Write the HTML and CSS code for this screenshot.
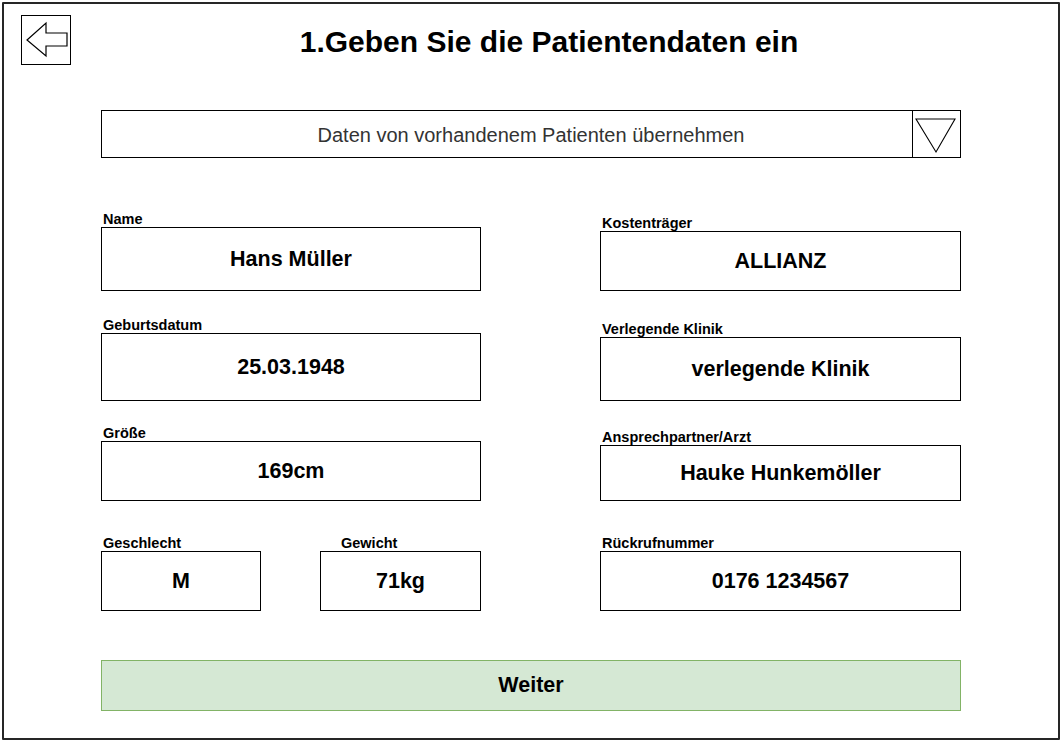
FILE: index.html
```html
<!DOCTYPE html>
<html lang="de">
<head>
<meta charset="utf-8">
<title>Patientendaten</title>
<link rel="stylesheet" href="styles.css">
</head>
<body>
<div class="frame">
  <header class="header">
    <button class="back" aria-label="Zurück">
      <svg width="48" height="48" viewBox="0 0 48 48"><polygon points="5,24 24,7 24,17 45,17 45,30 24,30 24,40" fill="#fff" stroke="#000" stroke-width="1.2" stroke-linejoin="miter"/></svg>
    </button>
    <h1 class="title">1.Geben Sie die Patientendaten ein</h1>
  </header>

  <div class="dropdown">
    <span class="dropdown-text">Daten von vorhandenem Patienten übernehmen</span>
    <span class="dropdown-btn">
      <svg width="47" height="46" viewBox="0 0 47 46"><polygon points="3,8 42,8 23,41" fill="none" stroke="#000" stroke-width="1.1"/></svg>
    </span>
  </div>

  <div class="fields">
    <div class="col">
      <div class="field">
        <div class="label">Name</div>
        <div class="box h64">Hans Müller</div>
      </div>
      <div class="field m26">
        <div class="label">Geburtsdatum</div>
        <div class="box h68">25.03.1948</div>
      </div>
      <div class="field m24">
        <div class="label">Größe</div>
        <div class="box h60">169cm</div>
      </div>
      <div class="pair m34">
        <div class="field small">
          <div class="label">Geschlecht</div>
          <div class="box h60">M</div>
        </div>
        <div class="field small wide">
          <div class="label indent">Gewicht</div>
          <div class="box h60">71kg</div>
        </div>
      </div>
    </div>
    <div class="col">
      <div class="field m4">
        <div class="label">Kostenträger</div>
        <div class="box h60">ALLIANZ</div>
      </div>
      <div class="field m30">
        <div class="label">Verlegende Klinik</div>
        <div class="box h64">verlegende Klinik</div>
      </div>
      <div class="field m28">
        <div class="label">Ansprechpartner/Arzt</div>
        <div class="box h56">Hauke Hunkemöller</div>
      </div>
      <div class="field m34">
        <div class="label">Rückrufnummer</div>
        <div class="box h60">0176 1234567</div>
      </div>
    </div>
  </div>

  <button class="next">Weiter</button>
</div>
</body>
</html>
```

FILE: styles.css
```css
* { box-sizing: border-box; }

html, body {
  margin: 0;
  padding: 0;
  background: #fff;
}

body {
  width: 1062px;
  height: 742px;
  overflow: hidden;
  font-family: "Liberation Sans", Arial, sans-serif;
  color: #000;
}

.frame {
  width: 1058px;
  height: 738px;
  margin: 2px;
  border: 2px solid #262626;
  border-radius: 1px;
}

.header {
  display: flex;
  align-items: center;
  padding: 11px 31px 0 17px;
}

.back {
  width: 50px;
  height: 50px;
  padding: 0;
  margin: 0;
  border: 1px solid #000;
  background: #fff;
  display: block;
}

.back svg { display: block; }

.title {
  flex: 1;
  margin: 3px 0 0;
  text-align: center;
  font-size: 30px;
  line-height: 36px;
  font-weight: bold;
}

.dropdown {
  width: 860px;
  height: 48px;
  margin: 45px auto 0;
  border: 1px solid #000;
  display: flex;
}

.dropdown-text {
  flex: 1;
  padding: 2px 0 0 48px;
  display: flex;
  align-items: center;
  justify-content: center;
  font-size: 20px;
  color: #333;
}

.dropdown-btn {
  width: 48px;
  border-left: 1px solid #000;
}

.dropdown-btn svg { display: block; }

.fields {
  width: 860px;
  margin: 53px auto 0;
  display: grid;
  grid-template-columns: 380px 361px;
  column-gap: 119px;
}

.col {
  display: flex;
  flex-direction: column;
}

.field { display: flex; flex-direction: column; }

.label {
  height: 16px;
  line-height: 16px;
  font-size: 14.5px;
  font-weight: bold;
  padding-left: 2px;
  white-space: nowrap;
}

.label.indent { padding-left: 21px; }

.box {
  border: 1px solid #000;
  display: flex;
  align-items: center;
  justify-content: center;
  font-size: 21.5px;
  font-weight: bold;
}

.h56 { height: 56px; }
.h60 { height: 60px; }
.h64 { height: 64px; }
.h68 { height: 68px; }

.m4 { margin-top: 4px; }
.m24 { margin-top: 24px; }
.m26 { margin-top: 26px; }
.m28 { margin-top: 28px; }
.m30 { margin-top: 30px; }
.m34 { margin-top: 34px; }

.pair {
  display: flex;
  justify-content: space-between;
}

.field.small { width: 160px; }
.field.small.wide { width: 161px; }

.next {
  display: block;
  width: 860px;
  height: 51px;
  margin: 49px auto 0;
  padding: 0;
  background: #d5e8d4;
  border: 1px solid #82b366;
  font-family: "Liberation Sans", Arial, sans-serif;
  font-size: 21.5px;
  font-weight: bold;
  color: #000;
}
```
